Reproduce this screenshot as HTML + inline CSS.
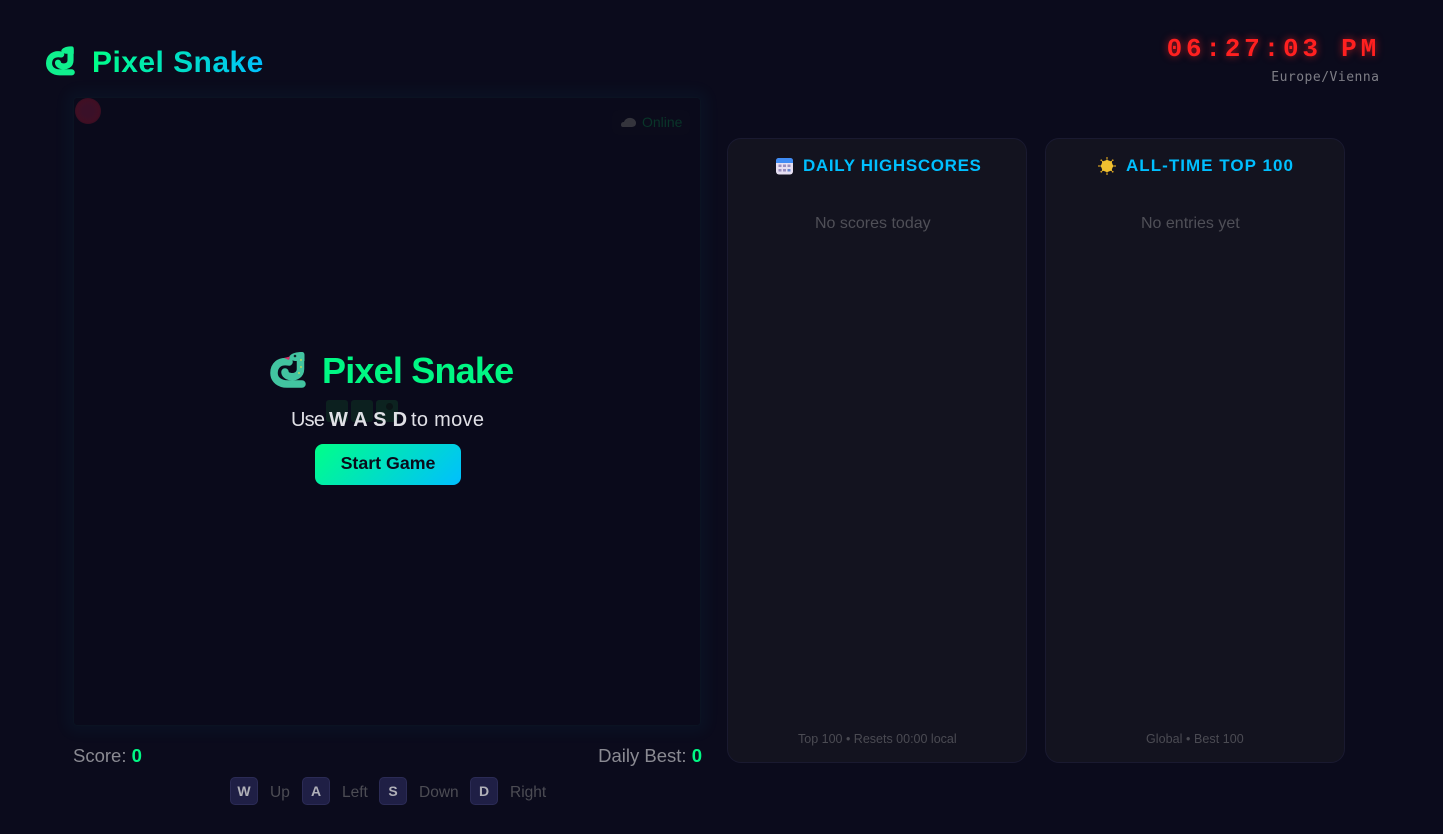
<!DOCTYPE html>
<html lang="en">
<head>
<meta charset="utf-8">
<title>Pixel Snake</title>
<style>
*{box-sizing:border-box}
html,body{margin:0;padding:0;width:1443px;height:834px;overflow:hidden;background:#0b0b1c}
body{position:relative;font-family:"Liberation Sans",sans-serif}
.a{position:absolute;white-space:nowrap;line-height:1}
.board{position:absolute;left:73px;top:97px;width:628px;height:629px;background:#0a0a1b;border:1px solid #0b1322;border-radius:4px;box-shadow:0 0 14px 8px rgba(0,200,220,.035)}
.card{position:absolute;top:138px;width:300px;height:625px;background:#13131f;border:1px solid #1a1a30;border-radius:14px}
.key{position:absolute;top:777px;width:28px;height:28px;background:#1f1f45;border:1px solid #2b2b55;border-radius:5px;color:#b0b0b8;font-weight:700;font-size:14px;line-height:27px;text-align:center}
.lbl{color:#4c4c54;font-size:15.5px;top:785px}
.h{color:#00bfff;font-weight:700;font-size:17px;top:157px}
.m{color:#4f4f57;font-size:16px;top:216px}
.f{color:#4b4b53;font-size:12.5px;top:733px}
</style>
</head>
<body>
<svg width="0" height="0" style="position:absolute">
<defs>
<symbol id="snake" viewBox="7 7 37 36">
<path d="M27 17C17 15 12 21 12 28C12 35 18 39 25 39L40 39" fill="none" stroke="currentColor" stroke-width="7.5" stroke-linecap="round"/>
<path d="M38.500 11L38.500 24C38.500 30 33 32.500 28 31.500C25 31 23 29 23 27" fill="none" stroke="currentColor" stroke-width="7.5" stroke-linecap="round"/>
<path d="M27 12C29 8 35 7 40 7C41.500 7 42.500 8 42.500 10L42.500 16L34 16C31 16 28 15 27 12Z" fill="currentColor"/>
</symbol>
</defs>
</svg>

<svg class="a" style="left:45px;top:45px;color:#10f08e" width="30" height="32"><use href="#snake" width="30" height="32"/></svg>
<div class="a" style="left:92px;top:48px;font-size:30px;font-weight:700;letter-spacing:.45px;background:linear-gradient(90deg,#00ff88,#00bfff);-webkit-background-clip:text;background-clip:text;color:transparent;padding-bottom:4px">Pixel Snake</div>

<div class="a" style="right:63px;top:36px;font-family:'Liberation Mono',monospace;font-weight:700;font-size:26px;letter-spacing:3.8px;color:#ff2020;text-shadow:0 0 8px rgba(255,30,30,.65)">06:27:03 PM</div>
<div class="a" style="right:63.500px;top:71px;font-family:'DejaVu Sans Mono','Liberation Mono',monospace;font-size:13px;letter-spacing:.5px;color:#7e7e86">Europe/Vienna</div>

<div class="board"></div>
<div class="a" style="left:75px;top:98px;width:26px;height:26px;border-radius:50%;background:radial-gradient(circle,#3a1028 0 30%,#400f24 60%,rgba(60,14,34,.75) 85%,rgba(60,14,34,0) 100%)"></div>
<div class="a" style="left:612px;top:110px;width:78px;height:25px;border-radius:6px;background:#0b0b1b"></div>
<svg class="a" style="left:620px;top:116px" width="17" height="12"><path d="M1 9C1 7 2 6 4 6C5 3 8 1.500 11 2C14 2.500 16 4.500 16 7C16 10 14 11 11 11L3 11C1.500 11 1 10 1 9Z" fill="#34343c"/></svg>
<div class="a" style="left:642px;top:115px;font-size:14px;color:#093529">Online</div>

<div class="a" style="left:326px;top:400px;width:22px;height:22px;border-radius:3px;background:#0c201f"></div>
<div class="a" style="left:351px;top:400px;width:22px;height:22px;border-radius:3px;background:#0c201f"></div>
<div class="a" style="left:376px;top:400px;width:22px;height:22px;border-radius:3px;background:#0c2320"></div>
<div class="a" style="left:386px;top:403px;width:7px;height:7px;border-radius:50%;background:#0a1416"></div>
<svg class="a" style="left:269px;top:352px;color:#42c4a0" width="37" height="36"><use href="#snake" width="37" height="36"/>
<path d="M15 6L21 4.500L20 8Z" fill="#d8326a"/>
<circle cx="26" cy="4" r="1.300" fill="#10242a"/>
<circle cx="32" cy="8" r="1" fill="#b8d860"/><circle cx="32" cy="15" r="1" fill="#b8d860"/><circle cx="30" cy="21" r="1" fill="#b8d860"/>
</svg>
<div class="a" style="left:322px;top:353px;font-size:36px;font-weight:700;letter-spacing:-.8px;color:#00f884;padding-bottom:4px">Pixel Snake</div>
<div class="a" style="left:291px;top:410px;font-size:20px;letter-spacing:-.8px;color:#e0e0e6">Use</div>
<div class="a" style="left:329px;top:410px;font-size:20px;font-weight:700;letter-spacing:.3px;color:#e0e0e6">W A S D</div>
<div class="a" style="left:411px;top:410px;font-size:20px;letter-spacing:.3px;color:#e0e0e6">to move</div>
<div class="a" style="left:315px;top:444px;width:146px;height:41px;border-radius:8px;background:linear-gradient(135deg,#00ff88,#00bfff);color:#0a0a1a;font-size:17.800px;font-weight:700;text-align:center;line-height:39px">Start Game</div>

<div class="a" style="left:73px;top:747px;font-size:18.500px;color:#8a8a92">Score: <b style="color:#00f884">0</b></div>
<div class="a" style="right:741px;top:747px;font-size:18.500px;color:#8a8a92">Daily Best: <b style="color:#00f884">0</b></div>

<div class="key" style="left:230px">W</div><div class="a lbl" style="left:270px">Up</div>
<div class="key" style="left:302px">A</div><div class="a lbl" style="left:342px">Left</div>
<div class="key" style="left:379px">S</div><div class="a lbl" style="left:419px">Down</div>
<div class="key" style="left:470px">D</div><div class="a lbl" style="left:510px">Right</div>

<div class="card" style="left:727px"></div>
<div class="card" style="left:1045px"></div>

<svg class="a" style="left:775px;top:157px" width="19" height="18">
<rect x="1" y="1" width="17" height="16.500" rx="3" fill="#e6dff2"/>
<path d="M1 6V4C1 2 2 1 4 1H15C17 1 18 2 18 4V6Z" fill="#3f8cf5"/>
<g fill="#9a8fc0"><rect x="3.500" y="7.500" width="3" height="2.500"/><rect x="8" y="7.500" width="3" height="2.500"/><rect x="12.500" y="7.500" width="3" height="2.500"/><rect x="3.500" y="12" width="3" height="2.500"/><rect x="8" y="12" width="3" height="2.500"/><rect x="12.500" y="12" width="3" height="2.500" fill="#6a88d0"/></g>
</svg>
<div class="a h" style="left:803px;letter-spacing:.65px">DAILY HIGHSCORES</div>
<div class="a m" style="left:815px">No scores today</div>
<div class="a f" style="left:798px">Top 100 • Resets 00:00 local</div>

<svg class="a" style="left:1098px;top:157px" width="18" height="18">
<circle cx="9" cy="9" r="5.800" fill="#f0c030"/>
<path d="M9 2L10.800 4.800L14 3.800L13.800 7L16 9L13.800 11L14 14.200L10.800 13.200L9 16L7.200 13.200L4 14.200L4.200 11L2 9L4.200 7L4 3.800L7.200 4.800Z" fill="#f0c030"/>
<g fill="#d8a020"><circle cx="9" cy="1" r=".9"/><circle cx="9" cy="17" r=".9"/><circle cx="1" cy="9" r=".9"/><circle cx="17" cy="9" r=".9"/><circle cx="3.300" cy="3.300" r=".9"/><circle cx="14.700" cy="3.300" r=".9"/><circle cx="3.300" cy="14.700" r=".9"/><circle cx="14.700" cy="14.700" r=".9"/></g>
</svg>
<div class="a h" style="left:1126px;letter-spacing:1.03px">ALL-TIME TOP 100</div>
<div class="a m" style="left:1141px">No entries yet</div>
<div class="a f" style="left:1146px;letter-spacing:.06px">Global • Best 100</div>
</body>
</html>
